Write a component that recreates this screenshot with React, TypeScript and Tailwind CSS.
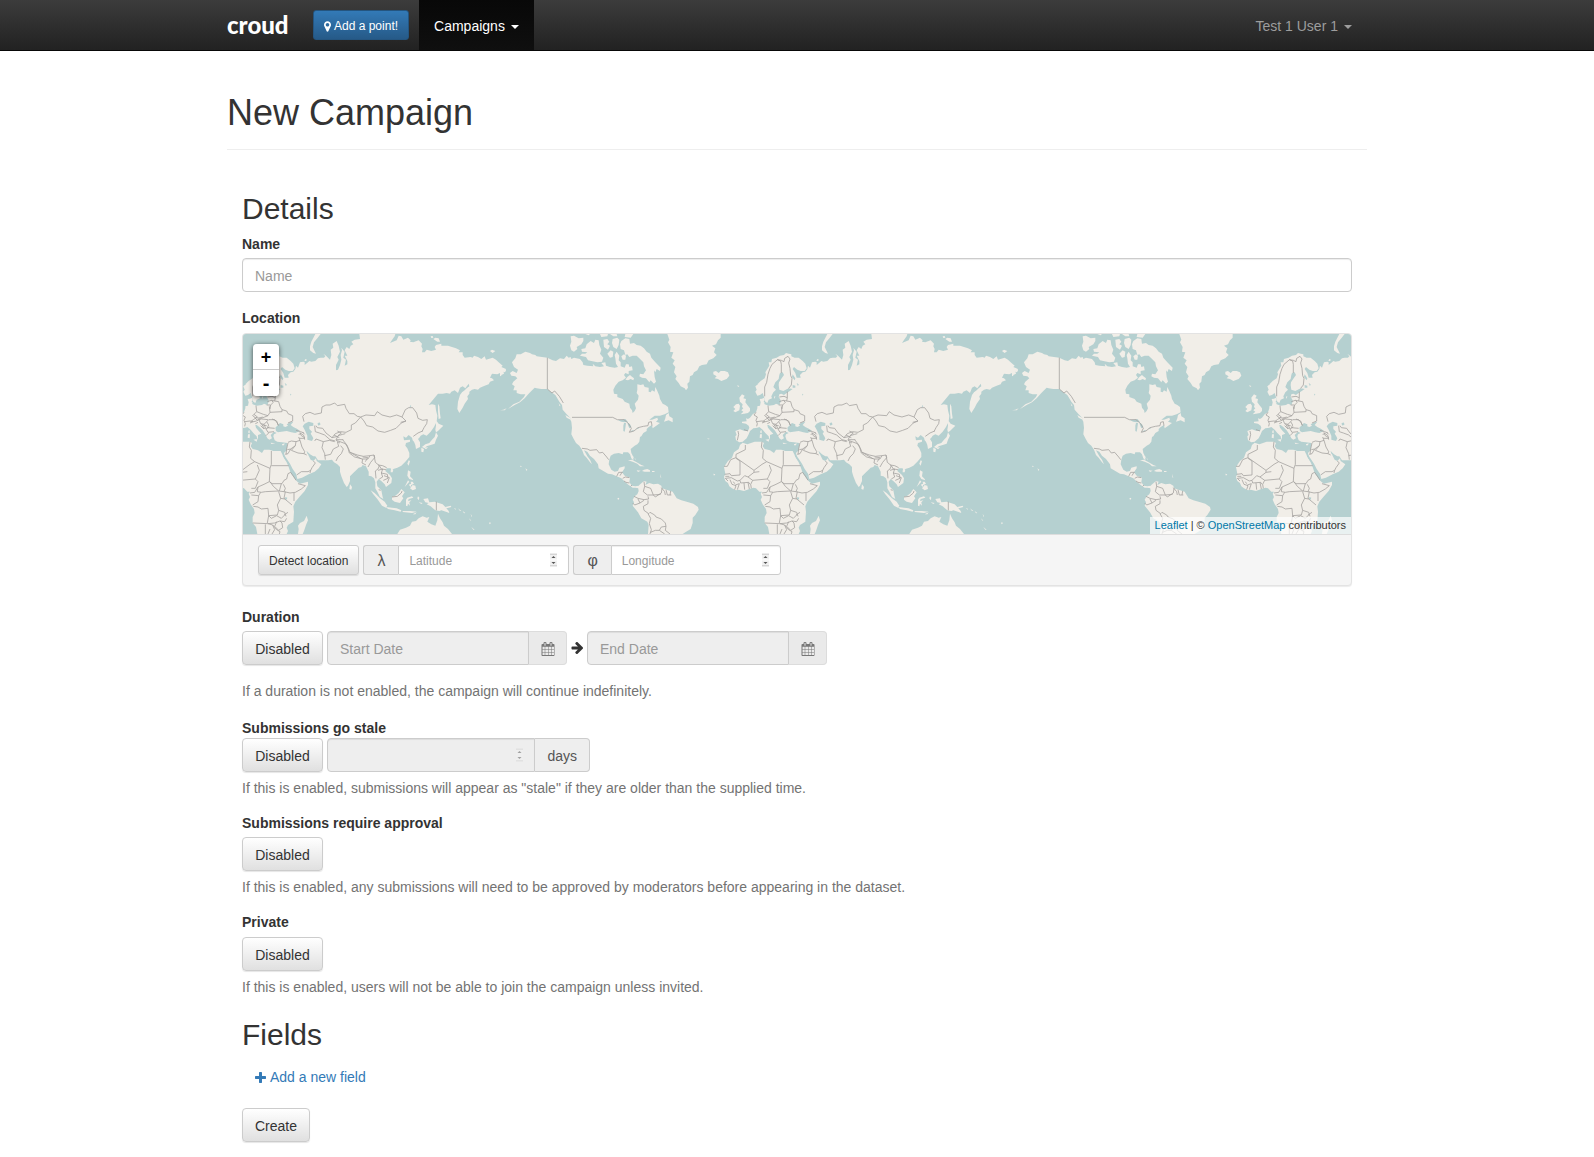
import React from "react";

const OLD_WORLD_LAND = [
  // Europe and Asia
  "M48,346 46,334 50,330 46,318 60,313 72,317 84,318 88,308 86,302 78,296 66,294 66,290 80,289 78,280 84,282 90,278 98,268 108,262 112,250 112,244 120,242 122,232 119,222 126,221 132,218 134,226 130,232 134,238 146,242 162,240 168,236 178,240 183,228 180,222 176,216 178,208 184,206 192,210 200,204 206,200 218,192 206,190 190,198 178,194 176,180 177,172 186,158 192,150 188,142 180,144 178,150 176,162 166,172 160,186 168,194 160,202 154,214 156,220 146,224 142,234 136,230 132,216 128,204 120,210 112,212 106,200 110,194 106,184 116,176 112,178 122,168 134,160 138,148 136,142 148,122 146,112 154,112 156,102 170,98 180,92 192,90 198,84 206,86 214,88 214,94 224,98 236,98 248,108 256,116 260,130 254,138 242,138 232,134 222,126 218,132 226,144 230,158 242,158 240,150 248,142 256,140 262,132 264,122 270,128 276,112 286,110 290,112 290,120 300,112 304,108 310,110 322,108 330,100 338,98 348,98 352,94 346,86 354,92 366,104 370,90 368,74 376,68 374,56 386,48 392,62 396,80 388,96 392,104 384,120 384,136 390,134 396,120 400,104 398,90 402,76 400,68 410,80 406,98 414,104 410,122 418,118 418,108 410,92 418,92 410,76 416,66 424,72 428,62 436,58 430,50 440,44 456,42 454,27 562,27 560,34 554,42 546,54 566,46 572,32 580,34 586,44 600,38 608,46 606,50 616,52 632,46 642,56 640,64 644,72 642,82 650,82 656,74 670,78 684,74 680,66 684,60 700,56 700,62 720,62 744,70 756,76 752,82 764,82 764,90 770,98 788,96 794,98 798,92 810,96 820,102 830,94 834,104 854,98 864,104 872,112 884,122 880,126 894,132 892,140 886,138 888,146 880,150 876,144 868,148 852,146 846,158 852,160 858,166 846,170 842,178 830,182 816,188 810,194 800,192 792,194 784,200 784,206 778,214 780,222 770,236 764,248 754,264 748,252 750,230 756,210 762,202 770,196 776,190 784,184 782,176 772,190 764,184 756,188 750,204 740,196 730,200 726,206 716,204 704,206 690,206 662,240 672,238 682,240 684,256 688,272 686,290 678,306 668,320 656,332 646,328 638,332 634,338 630,342 636,352 636,366 624,372 622,360 618,350 614,346 612,338 602,330 594,338 586,334 588,346 606,344 606,350 594,354 592,362 598,370 604,384 604,396 592,410 580,422 568,428 556,432 550,438 548,430 536,430 532,438 546,450 552,460 550,474 534,486 530,478 520,468 512,462 506,470 508,484 520,496 524,516 526,522 516,516 508,500 502,490 502,472 498,460 490,454 482,452 482,440 474,424 464,420 460,426 452,428 446,434 438,442 426,454 426,468 420,482 416,486 408,474 400,454 396,440 396,426 388,418 378,412 372,404 360,406 352,406 330,406 322,394 316,394 306,388 298,380 296,378 302,392 308,404 316,408 324,400 326,408 340,418 332,430 320,440 302,448 282,458 268,462 264,446 254,432 246,416 234,398 230,392 228,384 236,376 238,354 222,352 208,350 200,346 196,334 198,328 206,324 198,320 192,326 188,330 192,340 184,344 178,340 172,328 164,316 154,306 146,300 142,300 144,308 152,318 160,326 150,330 150,338 148,344 146,334 136,324 128,314 118,306 112,308 100,310 90,318 86,328 80,340 68,350 58,352z",
  // Africa
  "M68,353 82,358 104,350 126,350 132,354 128,364 134,372 150,376 162,384 168,374 184,374 196,378 218,378 222,386 228,398 236,412 242,426 248,444 258,458 268,470 276,476 300,470 300,480 290,498 274,516 262,530 256,544 258,560 256,590 240,600 236,608 240,618 236,627 148,627 144,606 134,594 134,576 140,564 138,552 128,538 122,524 126,516 122,506 126,500 118,500 108,490 100,488 88,492 72,498 56,494 48,496 36,490 28,484 24,474 16,468 12,456 16,446 12,426 24,408 36,398 42,382 56,372 60,360z",
  // British Isles
  "M66,208 74,212 70,220 78,222 76,232 82,240 90,250 90,258 84,264 72,266 62,268 70,260 64,256 70,250 66,246 68,238 60,230 58,218z",
  "M48,238 56,236 60,242 58,256 46,262 40,258 46,252 40,246z",
  // Mediterranean islands
  "M136,344 148,342 146,350z M120,328 126,328 125,340 119,338z M121,317 125,316 125,325 121,324z M188,353 202,355 190,357z M222,358 230,355 228,361 222,361z",
  // Danish islands, Gotland
  "M126,234 134,232 132,240 127,239z M162,216 166,212 164,222z",
  // Novaya Zemlya
  "M322,27 338,27 328,40 318,52 314,66 318,74 324,86 316,84 306,76 306,64 310,50z",
  // Arctic islands
  "M682,38 692,40 696,50 688,50 676,42z M846,78 852,74 862,78 854,84z M292,102 297,104 294,108 289,107z M668,34 674,33 676,38 670,39z",
  // Sakhalin and Japan
  "M690,236 694,244 696,266 698,280 692,282 690,260z M684,286 692,296 706,302 696,312 690,318 684,322 682,314 684,302z M684,322 690,332 684,344 680,356 668,360 656,364 650,370 642,366 652,358 664,354 672,344 680,336z M640,368 648,372 646,382 640,380z M652,368 660,366 656,371 650,372z",
  // Taiwan, Hainan, Sri Lanka
  "M602,406 606,408 602,422 598,416z M548,436 556,434 554,442 548,442z M426,478 432,486 430,494 424,492z",
  // Philippines
  "M600,436 608,440 606,454 614,462 616,466 604,462 598,452z M608,470 614,470 618,476 610,480z M600,466 604,470 592,484 590,486z M614,480 622,482 624,492 614,496 606,490z M606,476 610,478 608,486 603,480z",
  // Indonesia and New Guinea
  "M488,496 500,504 516,520 530,530 538,542 534,548 522,542 508,522 496,508z M534,546 552,548 566,550 580,556 578,560 560,556 540,552z M552,516 562,512 572,504 580,492 590,502 582,514 586,520 576,534 560,530 552,524z M594,524 598,518 612,514 616,518 602,522 600,528 610,526 604,532 606,542 600,536 598,544 594,542z M584,558 606,558 626,560 612,564 584,561z M614,568 626,562 622,568z M630,514 634,518 632,526 628,520z M632,532 644,534 640,537z M646,522 660,520 664,532 680,530 704,538 712,546 722,558 724,564 714,560 700,556 694,558 682,556 668,544 656,538 662,534 652,532z M712,546 728,542 730,546 716,550z M738,548 744,552 742,554z M750,550 760,558 756,558z M764,558 772,564 768,565z M788,566 792,574 790,575z M784,580 790,588 786,586z M790,606 800,614 796,614z M844,592 850,594 844,598z",
  // Australia
  "M568,627 576,614 594,608 606,602 612,590 624,588 632,580 644,574 656,578 664,576 658,590 670,598 682,602 688,586 690,566 696,580 704,592 708,602 720,612 732,627z",
  // Madagascar
  "M296,572 300,586 294,600 288,618 284,627 270,627 272,612 270,602 276,594 288,588z",
].join(" ");

const OLD_WORLD_WATER = [
  // Black Sea and Azov
  "M204,318 202,308 212,298 216,294 226,298 226,304 232,306 240,302 236,298 248,292 256,290 248,300 256,306 268,312 276,318 262,324 250,322 236,318 220,320 210,322z",
  // Caspian and Aral
  "M290,296 302,290 316,294 316,302 304,304 304,312 312,320 308,326 312,332 316,340 312,348 298,344 298,332 290,314 284,304z M328,296 334,292 338,298 332,302z",
  // Lakes and White Sea arm
  "M218,180 226,182 226,188 218,188z M230,174 236,178 234,184z M218,148 226,160 224,166 216,156z M246,206 250,208 248,212z M232,516 238,518 236,524 231,522z M604,248 608,240 610,244z",
  "M228,388 224,392 234,408 230,394z M296,378 300,384 298,388z",
].join(" ");

const OLD_WORLD_BORDERS = [
  // Scandinavia and the Baltic
  "M134,214 134,186 140,172 144,148 150,130 156,118 168,108 172,104 182,108 184,118 184,144 M172,104 184,106 192,110 194,100 204,94 210,102 206,114 210,130 212,152 216,160 214,180 206,190",
  "M178,216 192,214 202,218 M202,200 202,218 M178,230 190,226 196,232 M190,226 200,228 212,230 216,244 222,254 M196,232 188,240 186,252 M188,240 176,240",
  "M202,218 200,228 M186,262 222,260 222,254 236,258 240,266 254,272 254,288 240,294",
  // Central Europe
  "M144,242 146,260 138,268 148,276 136,284 128,290 M146,260 166,268 180,272 186,262 184,244 M108,262 102,270 112,276 108,286 112,296 110,304 M138,268 134,272 142,278 160,280 170,276 180,272 M110,290 126,288 136,290 146,288 152,282 M126,294 136,290 M152,282 158,296 M158,296 168,298 176,290 182,284 200,284 208,294 212,302 M176,290 182,300 178,308 200,310 M168,298 174,312 180,322 198,320 M158,302 168,312 M174,312 184,306 M142,296 150,292 M160,296 170,312 M182,324 174,332 M164,300 176,302 M192,282 206,288 210,300 M140,278 148,286 160,282 180,284 M152,280 164,276 M54,318 56,328 52,346 M84,318 72,314",
  // Caucasus and the Middle East
  "M264,316 278,320 288,324 M276,322 280,332 290,338 M272,328 280,326 288,332 290,344 M284,322 290,328 M274,340 290,340 M240,352 250,348 264,350 276,346 272,336 M264,350 262,362 248,372 238,374 M262,362 250,376 270,384 288,386 290,380 282,366 276,346 M248,372 240,386 232,388 M240,354 236,372 234,388 M288,386 296,390 M266,450 280,440 300,440 308,436 312,428 322,414 316,408 M308,436 306,444",
  // Central Asia
  "M288,290 284,274 292,266 306,262 320,268 340,264 342,246 354,240 366,240 380,234 388,242 410,238 414,250 424,266 438,266 448,274 458,276 442,294 430,300 430,314 414,322 398,320 382,326 372,338 354,324 344,310 328,308 324,302 M320,302 322,320 334,324 350,330 366,344 382,348 M388,318 400,324 390,332 404,328 412,326 M378,330 394,338 M372,338 390,334 384,344 406,344 M384,346 396,350 412,356 M320,348 324,342 346,350 364,346 380,350 M346,350 342,368 350,386 352,404 M350,392 368,388 376,372 392,364 388,350 396,354 M398,362 406,372 400,386 390,396 384,408 M412,356 422,372 426,382 444,392 460,402",
  // South Asia, China, Mongolia
  "M404,344 418,362 424,384 440,396 464,402 480,402 486,392 498,390 500,398 488,412 480,426 M426,382 448,390 466,394 486,392 M464,402 462,414 474,420 M464,396 480,398 M472,410 478,400 M498,390 502,412 514,422 510,432 502,438 504,460 M514,422 520,432 534,434 M510,436 524,432 520,444 538,448 540,460 526,466 M520,444 524,456 514,462 M510,420 524,422 536,428 M528,452 544,458 538,474",
  "M458,276 474,270 500,272 508,260 522,270 546,276 566,270 582,276 594,288 580,294 564,310 548,316 530,322 510,318 494,306 476,302 468,288 458,276 M582,276 592,254 602,248 614,248 626,264 630,280 644,286 658,284 656,296 648,308 642,320 M594,288 578,292 M616,334 630,324 644,318",
  "M552,516 568,514 580,504 582,498 M685,530 685,556 M512,494 518,496",
  // Africa
  "M126,350 124,366 130,376 128,400 140,410 186,430 190,418 190,378 M190,422 242,422 M76,360 76,374 60,382 48,388 48,398 102,436 126,418 140,410 M48,400 60,408 60,450 34,452 30,446 14,448 M48,398 32,404 22,424 12,424 M102,436 102,442 84,456 74,452 60,466 52,468 34,458 16,460 M102,442 118,440 M84,456 98,466 142,462 146,454 154,436 148,420 M142,462 150,470 142,490 130,490 M98,466 92,478 94,490 M60,466 62,474 86,472 90,478 M72,474 74,494 M84,472 88,492 M46,480 58,476 52,494 M30,464 36,478 48,482 44,494 M16,460 24,468 M40,470 44,476 M16,454 28,454 M126,504 140,502 150,486 168,478 184,470 186,430 M184,470 192,476 222,476 228,466 236,462 240,446 248,442 258,456 264,466 M150,486 148,500 160,502 172,500 212,498 228,500 232,490 226,478 M212,498 196,484 186,470 M228,500 246,504 262,502 280,492 292,482 270,476 M258,504 258,528 M232,500 228,520 252,540 M130,510 152,512 158,502 M152,512 150,530 134,540 M136,544 150,546 160,552 180,550 182,572 178,594 M212,500 218,520 208,540 212,556 208,570 182,572 M212,556 230,562 234,574 M182,572 190,580 206,572 220,580 230,570 M134,594 180,596 200,594 216,588 230,590 236,580 M172,598 172,627 M180,596 194,600 206,614 M194,600 200,614 192,627 M206,590 200,604 212,616 224,608 222,594 216,588 M206,614 216,620 214,627 M218,520 230,522 M186,612 180,627 M220,476 214,498 M228,570 240,562",
].join(" ");

const AMERICAS_LAND = [
  // North America
  "M36,112 46,100 50,88 62,88 76,80 90,84 96,88 106,90 110,94 126,96 142,98 158,106 168,108 180,100 192,102 200,92 206,98 212,96 214,102 222,98 240,102 248,112 250,120 262,122 280,124 278,116 286,124 300,126 312,124 304,114 316,112 318,122 330,126 344,128 354,126 348,116 346,100 344,90 350,80 358,92 356,106 362,112 362,124 374,128 378,118 386,118 388,126 396,124 398,136 386,138 386,148 376,144 372,150 378,158 368,166 356,170 346,182 340,194 342,206 352,208 352,216 368,222 374,230 388,236 390,248 396,256 398,264 404,258 408,250 404,236 414,224 416,212 410,204 412,194 412,178 422,180 430,178 434,186 446,188 446,200 452,202 456,196 464,200 466,186 472,198 478,212 480,222 488,236 496,240 504,246 506,262 494,268 480,272 464,272 448,284 456,284 472,278 474,284 468,290 480,294 472,300 458,310 456,300 446,306 440,312 440,318 430,324 424,334 420,336 418,350 412,358 404,362 392,372 394,384 400,396 400,406 394,400 390,388 384,382 370,382 368,388 356,384 342,386 332,392 328,404 326,418 334,434 344,440 354,438 358,428 374,424 374,430 366,442 374,452 390,458 388,472 396,482 406,484 416,482 416,490 406,488 398,488 386,480 376,472 364,460 350,454 336,448 324,446 310,438 296,430 294,418 282,402 270,392 262,380 252,376 262,394 270,404 276,418 270,412 260,398 252,390 246,374 238,362 228,354 220,340 214,328 216,308 214,290 210,282 212,280 200,268 188,254 186,240 178,230 166,210 154,202 142,192 124,192 110,190 104,188 94,198 86,206 74,220 60,232 44,240 24,252 40,238 58,230 72,216 76,208 62,208 50,204 50,196 40,196 44,184 36,178 40,170 52,160 46,154 34,152 30,144 38,138 50,144 54,134 42,126z",
  // Siberian tip, Aleutians, Hawaii
  "M0,128 10,132 18,136 14,142 4,138 4,152 0,154z M0,256 10,254 20,250 14,256z M76,430 82,434 80,438z M60,422 66,424 62,426z",
  // Canadian Arctic
  "M212,34 222,32 236,40 250,38 250,48 244,58 230,66 232,72 222,80 214,76 210,62 214,50z",
  "M260,58 272,48 282,54 286,44 296,46 298,60 304,74 300,86 310,98 306,110 292,112 274,108 264,106 258,96 240,92 246,86 256,86 262,82 246,80 244,72 256,70z",
  "M310,44 322,42 328,50 322,58 330,62 324,74 312,66z M338,42 352,38 358,44 356,60 350,72 340,66 336,54z M332,76 340,80 338,96 330,98 322,86z",
  "M364,48 376,40 388,42 390,56 402,54 410,60 422,62 432,70 440,80 450,86 454,98 466,112 482,128 480,138 470,132 466,142 462,136 464,156 468,170 462,176 452,166 448,172 438,160 426,158 418,154 420,146 430,148 438,136 432,124 430,112 418,100 410,92 398,92 388,96 382,88 376,90 372,76 362,72 360,58z",
  "M382,156 390,150 394,154 402,160 400,166 392,162 384,166 376,164z M372,88 378,92 376,104 368,104 364,94z M256,27 270,27 266,31z M300,27 324,27 322,34 304,36z M330,27 350,27 352,34 340,34z M376,27 400,27 392,38 374,36z",
  // Newfoundland, Vancouver Island, Iceland
  "M506,264 508,274 518,280 518,292 506,286 492,290 496,280 498,270z M196,270 210,278 212,284 200,278z M176,234 182,244 178,242z",
  "M640,140 648,138 656,144 662,138 674,138 684,142 688,152 680,162 664,168 654,162 644,160 650,154 640,148z",
  // Greenland
  "M502,27 508,44 504,52 512,66 510,80 520,82 514,98 524,106 518,116 526,126 522,142 530,154 526,162 536,174 542,184 554,190 558,196 564,188 562,176 568,170 570,154 578,150 582,142 592,136 598,124 606,120 620,118 626,106 640,100 650,90 642,82 646,70 636,62 648,58 654,46 662,38 662,27z",
  // Caribbean
  "M384,406 396,404 410,412 424,420 434,424 420,424 412,416 398,410z M432,434 442,432 450,436 450,440 434,440 426,438z M410,436 422,437 414,441z M456,438 464,438 463,441 456,441z M398,394 402,396 400,398z M404,398 408,404 405,403z M480,446 484,460 481,456z M354,518 358,520 356,524 352,522z M622,340 630,342 624,343z M712,180 718,184 714,186z M640,446 646,448 642,452z",
  // South America
  "M414,486 418,480 432,468 440,470 436,480 448,474 460,478 474,476 484,482 486,490 500,494 518,500 524,510 530,520 544,526 560,530 580,536 594,546 596,554 586,570 578,578 578,594 572,612 556,622 548,627 444,627 446,600 442,590 424,580 414,562 398,542 402,532 398,524 404,514 412,508 416,498z",
].join(" ");

const AMERICAS_WATER =
  "M354,286 366,284 376,282 384,290 374,292 364,290z M372,294 378,294 376,310 374,320 370,318 370,302z M382,292 390,298 394,306 388,310 384,300z M388,320 398,316 404,314 396,320z M408,310 418,308 414,312z";

const AMERICAS_BORDERS = [
  "M142,98 142,192 156,204 164,198 178,214 190,234 M216,277 338,277 352,284 372,284 386,296 394,310 388,322 402,318 414,308 430,304 444,302 446,292 454,290 456,302",
  "M246,370 262,372 270,376 290,374 298,384 308,382 320,396 326,404 M350,454 356,442 368,442 M366,442 360,452 M368,460 376,456 388,458 M372,468 378,472 388,474 M392,484 396,480",
  "M432,470 434,484 452,490 460,510 M434,484 430,500 442,510 460,510 466,516 484,504 486,490 M460,510 482,508 M484,488 494,500 496,510 M498,494 502,510 514,510 M512,498 510,510 M416,488 M402,514 414,520 432,524 446,522 444,514 M414,522 420,534 M398,534 404,540 420,534 432,526 M444,526 444,536 430,544 432,556 446,566 450,562 464,570 468,576 484,582 496,594 498,604 M444,566 452,580 448,596 454,614 452,622 466,616 478,616 M478,616 484,606 498,604 496,616 510,627 M478,616 494,627 M452,620 450,627",
].join(" ");

/* The drawing repeats every 1536 units, one full turn of the globe. */
const WORLD_COPIES = [-1536, 0, 1536, 3072];

function WorldMap() {
  return (
    <svg className="block h-full w-full" role="img" aria-label="World map">
      <defs>
        <g id="world" strokeLinejoin="round">
          <g transform="translate(-105 -27)">
            <path d={OLD_WORLD_LAND} fill="#f1eee8" />
            <path d={OLD_WORLD_WATER} fill="#b5d0d0" />
            <path d={OLD_WORLD_BORDERS} fill="none" stroke="#a5a2a0" strokeWidth="2.4" />
          </g>
          <g transform="translate(771 -27)">
            <path d={AMERICAS_LAND} fill="#f1eee8" />
            <path d={AMERICAS_WATER} fill="#b5d0d0" />
            <path d={AMERICAS_BORDERS} fill="none" stroke="#a5a2a0" strokeWidth="2.4" />
          </g>
        </g>
      </defs>
      <g transform="scale(0.33333)">
        {WORLD_COPIES.map((x) => (
          <use key={x} href="#world" x={x} />
        ))}
      </g>
    </svg>
  );
}

function CalendarIcon() {
  return (
    <svg viewBox="0 0 1792 1792" className="size-[14px]" fill="currentColor" aria-hidden="true">
      <path d="M192 1664h288v-288h-288v288zM544 1664h352v-288h-352v288zM192 1312h288v-352h-288v352zM544 1312h352v-352h-352v352zM192 896h288v-288h-288v288zM960 1664h352v-288h-352v288zM544 896h352v-288h-352v288zM1376 1664h288v-288h-288v288zM960 1312h352v-352h-352v352zM576 448v-288q0-13-9.5-22.5t-22.5-9.5h-64q-13 0-22.5 9.5t-9.5 22.5v288q0 13 9.5 22.5t22.5 9.5h64q13 0 22.5-9.5t9.5-22.5zM1376 1312h288v-352h-288v352zM960 896h352v-288h-352v288zM1376 896h288v-288h-288v288zM1344 448v-288q0-13-9.5-22.5t-22.5-9.5h-64q-13 0-22.5 9.5t-9.5 22.5v288q0 13 9.5 22.5t22.5 9.5h64q13 0 22.5-9.5t9.5-22.5zM1728 384v1280q0 52-38 90t-90 38h-1408q-52 0-90-38t-38-90v-1280q0-52 38-90t90-38h128v-96q0-66 47-113t113-47h64q66 0 113 47t47 113v96h384v-96q0-66 47-113t113-47h64q66 0 113 47t47 113v96h128q52 0 90 38t38 90z" />
    </svg>
  );
}

function ArrowRightIcon() {
  return (
    <svg viewBox="64 192 1536 1536" className="size-[12px]" fill="currentColor" aria-hidden="true">
      <path d="M1600 960q0 54-37 91l-651 651q-39 37-91 37-51 0-90-37l-75-75q-38-38-38-91t38-91l293-293h-704q-52 0-84.500-37.500t-32.500-90.500v-128q0-53 32.500-90.500t84.500-37.500h704l-293-294q-38-36-38-90t38-90l75-75q38-38 90-38 53 0 91 38l651 651q37 35 37 90z" />
    </svg>
  );
}

function PlusIcon() {
  return (
    <svg viewBox="192 128 1408 1408" className="size-[11px]" fill="currentColor" aria-hidden="true">
      <path d="M1600 736v192q0 40-28 68t-68 28h-416v416q0 40-28 68t-68 28h-192q-40 0-68-28t-28-68v-416h-416q-40 0-68-28t-28-68v-192q0-40 28-68t68-28h416v-416q0-40 28-68t68-28h192q40 0 68 28t28 68v416h416q40 0 68 28t28 68z" />
    </svg>
  );
}

function MarkerIcon() {
  return (
    <svg viewBox="384 128 1024 1536" className="h-[11px] w-[7px]" fill="currentColor" aria-hidden="true">
      <path d="M1152 640q0-106-75-181t-181-75-181 75-75 181 75 181 181 75 181-75 75-181zM1408 640q0 109-33 179l-364 774q-16 33-47.500 52t-67.500 19-67.500-19-46.500-52l-365-774q-33-70-33-179 0-212 150-362t362-150 362 150 150 362z" />
    </svg>
  );
}

function Caret() {
  return (
    <svg viewBox="0 0 8 4" className="mt-[2px] h-[4px] w-[8px]" fill="currentColor" aria-hidden="true">
      <path d="M0 0h8l-4 4z" />
    </svg>
  );
}

function Spinner({ faded = false }: { faded?: boolean }) {
  return (
    <svg
      viewBox="0 0 7 13"
      className={`pointer-events-none absolute top-1/2 right-3 h-[13px] w-[7px] -translate-y-1/2 ${faded ? "opacity-50" : ""}`}
      fill="none"
      aria-hidden="true"
    >
      <path d="M0 0h7v6H0zM0 7h7v6H0z" fill="#f1f1f1" />
      <path d="M0 .5h7M0 12.5h7" stroke="#b9b9b9" />
      <path d="M1.5 4.5l2-2 2 2zM1.5 8.500l2 2 2-2z" fill="#555" />
    </svg>
  );
}

const buttonLook =
  "border border-[#ccc] bg-linear-to-b from-white to-[#e0e0e0] pt-[2px] text-[#333] shadow-[0_1px_1px_rgba(0,0,0,0.1)]";
const inputLook =
  "min-w-0 border border-[#ccc] pt-[2px] shadow-[inset_0_1px_1px_rgba(0,0,0,0.075)] outline-none placeholder:text-[#999] disabled:bg-[#eee] [appearance:textfield] [&::-webkit-inner-spin-button]:appearance-none [&::-webkit-outer-spin-button]:appearance-none";

function DisabledToggle({ labelledBy }: { labelledBy: string }) {
  return (
    <button
      type="button"
      aria-pressed="false"
      aria-describedby={labelledBy}
      className={`h-[34px] w-[81px] rounded ${buttonLook}`}
    >
      Disabled
    </button>
  );
}

function DateField({ label }: { label: string }) {
  return (
    <div className="flex h-[34px] w-[240px]">
      <input
        type="text"
        disabled
        aria-label={label}
        placeholder={label}
        className={`flex-1 rounded-l px-3 ${inputLook}`}
      />
      <button
        type="button"
        disabled
        aria-label={`Pick ${label}`}
        className="flex w-[38px] items-center justify-center rounded-r border border-l-0 border-[#dcdcdc] bg-[#eaeaea] pt-[2px] text-[#777]"
      >
        <CalendarIcon />
      </button>
    </div>
  );
}

function CoordinateField({ symbol, label, widthClass }: { symbol: string; label: string; widthClass: string }) {
  return (
    <div className={`flex h-[30px] ${widthClass}`}>
      <span className="flex items-center rounded-l-[3px] border border-r-0 border-[#ccc] bg-[#eee] px-[13px] pt-[2px] text-base text-[#555]">
        {symbol}
      </span>
      <div className="relative flex min-w-0 flex-1">
        <input
          type="number"
          aria-label={label}
          placeholder={label}
          className={`w-full rounded-r-[3px] bg-white px-[10px] text-xs ${inputLook}`}
        />
        <Spinner />
      </div>
    </div>
  );
}

function HelpText({ children }: { children: React.ReactNode }) {
  return <p className="text-[#737373]">{children}</p>;
}

export default function App() {
  return (
    <div className="bg-white font-['Liberation_Sans',Arial,sans-serif] text-sm text-[#333]">
      <nav className="border-b border-[#080808] bg-linear-to-b from-[#3c3c3c] to-[#222]">
        <div className="mx-auto flex h-[50px] max-w-[1140px] items-stretch">
          <a href="#" className="flex w-[86px] items-center font-[Lato,sans-serif] text-2xl font-black text-white">
            croud
          </a>
          <a
            href="#"
            className="mt-[10px] mr-[10px] flex h-[30px] items-center gap-[3px] rounded-[3px] border border-[#245580] bg-linear-to-b from-[#337ab7] to-[#265a88] px-[10px] pt-[2px] text-xs text-white"
          >
            <MarkerIcon />
            Add a point!
          </a>
          <a
            href="#"
            className="flex items-center gap-[6px] bg-linear-to-b from-[#080808] to-[#0f0f0f] px-[15px] pt-[2px] text-white"
          >
            Campaigns
            <Caret />
          </a>
          <a href="#" className="ml-auto flex items-center gap-[6px] px-[15px] pt-[2px] text-[#9d9d9d]">
            Test 1 User 1
            <Caret />
          </a>
        </div>
      </nav>

      <main className="mx-auto max-w-[1140px] pb-[15px]">
        <header className="border-b border-[#eee] pt-[42px] pb-[16px]">
          <h1 className="text-4xl leading-[40px]">New Campaign</h1>
        </header>

        <form className="px-[15px] pt-[42px]" onSubmit={(event) => event.preventDefault()}>
          <h2 className="text-3xl leading-[34px]">Details</h2>

          <div className="mt-[8px]">
            <label htmlFor="name" className="block font-bold">
              Name
            </label>
            <input
              id="name"
              type="text"
              placeholder="Name"
              className={`mt-[4px] h-[34px] w-full rounded bg-white px-3 ${inputLook}`}
            />
          </div>

          <section aria-labelledby="location" className="mt-[16px]">
            <h3 id="location" className="font-bold">
              Location
            </h3>
            <div className="mt-[5px] overflow-hidden rounded border border-[#e3e3e3] bg-[#f5f5f5] shadow-[0_1px_1px_rgba(0,0,0,0.08)]">
              <div className="relative h-[200px] overflow-hidden bg-[#b5d0d0]">
                <WorldMap />
                <div className="absolute top-[10px] left-[10px] overflow-hidden rounded shadow-[0_1px_5px_rgba(0,0,0,0.65)]">
                  <button
                    type="button"
                    aria-label="Zoom in"
                    className="flex size-[26px] items-center justify-center border-b border-[#ccc] bg-white text-lg font-bold text-black"
                  >
                    +
                  </button>
                  <button
                    type="button"
                    aria-label="Zoom out"
                    className="flex size-[26px] items-center justify-center bg-white text-xl font-bold text-black"
                  >
                    -
                  </button>
                </div>
                <p className="absolute right-0 bottom-0 bg-white/70 px-[5px] text-[11px] leading-[17px]">
                  <a href="#" className="text-[#0078a8]">
                    Leaflet
                  </a>{" "}
                  | ©{" "}
                  <a href="#" className="text-[#0078a8]">
                    OpenStreetMap
                  </a>{" "}
                  contributors
                </p>
              </div>
              <div className="flex gap-[4px] border-t border-[#ddd] px-[15px] py-[10px]">
                <button type="button" className={`h-[30px] rounded-[3px] px-[10px] text-xs ${buttonLook}`}>
                  Detect location
                </button>
                <CoordinateField symbol="λ" label="Latitude" widthClass="w-[206px]" />
                <CoordinateField symbol="φ" label="Longitude" widthClass="w-[208px]" />
              </div>
            </div>
          </section>

          <section className="mt-[21px]">
            <h3 id="duration" className="font-bold">
              Duration
            </h3>
            <div className="mt-[4px] mb-[16px] flex items-center gap-[4px]">
              <DisabledToggle labelledBy="duration" />
              <DateField label="Start Date" />
              <ArrowRightIcon />
              <DateField label="End Date" />
            </div>
            <HelpText>If a duration is not enabled, the campaign will continue indefinitely.</HelpText>
          </section>

          <section className="mt-[17px]">
            <h3 id="stale" className="font-bold">
              Submissions go stale
            </h3>
            <div className="mb-[6px] flex gap-[4px]">
              <DisabledToggle labelledBy="stale" />
              <div className="flex h-[34px] w-[263px]">
                <div className="relative flex min-w-0 flex-1">
                  <input
                    type="number"
                    disabled
                    aria-labelledby="stale"
                    className={`w-full rounded-l px-3 ${inputLook}`}
                  />
                  <Spinner faded />
                </div>
                <span className="flex items-center rounded-r border border-l-0 border-[#ccc] bg-[#eee] px-3 pt-[2px] text-[#555]">
                  days
                </span>
              </div>
            </div>
            <HelpText>
              If this is enabled, submissions will appear as "stale" if they are older than the supplied time.
            </HelpText>
          </section>

          <section className="mt-[15px]">
            <h3 id="approval" className="mb-[4px] font-bold">
              Submissions require approval
            </h3>
            <DisabledToggle labelledBy="approval" />
            <div className="mt-[6px]">
              <HelpText>
                If this is enabled, any submissions will need to be approved by moderators before appearing in the
                dataset.
              </HelpText>
            </div>
          </section>

          <section className="mt-[15px]">
            <h3 id="private" className="mb-[5px] font-bold">
              Private
            </h3>
            <DisabledToggle labelledBy="private" />
            <div className="mt-[6px]">
              <HelpText>If this is enabled, users will not be able to join the campaign unless invited.</HelpText>
            </div>
          </section>

          <h2 className="mt-[21px] text-3xl leading-[34px]">Fields</h2>
          <button type="button" className="mt-[8px] flex h-[34px] items-center gap-[4px] px-[13px] text-[#337ab7]">
            <PlusIcon />
            Add a new field
          </button>
          <button type="submit" className={`mt-[14px] block h-[34px] rounded px-3 ${buttonLook}`}>
            Create
          </button>
        </form>
      </main>
    </div>
  );
}
